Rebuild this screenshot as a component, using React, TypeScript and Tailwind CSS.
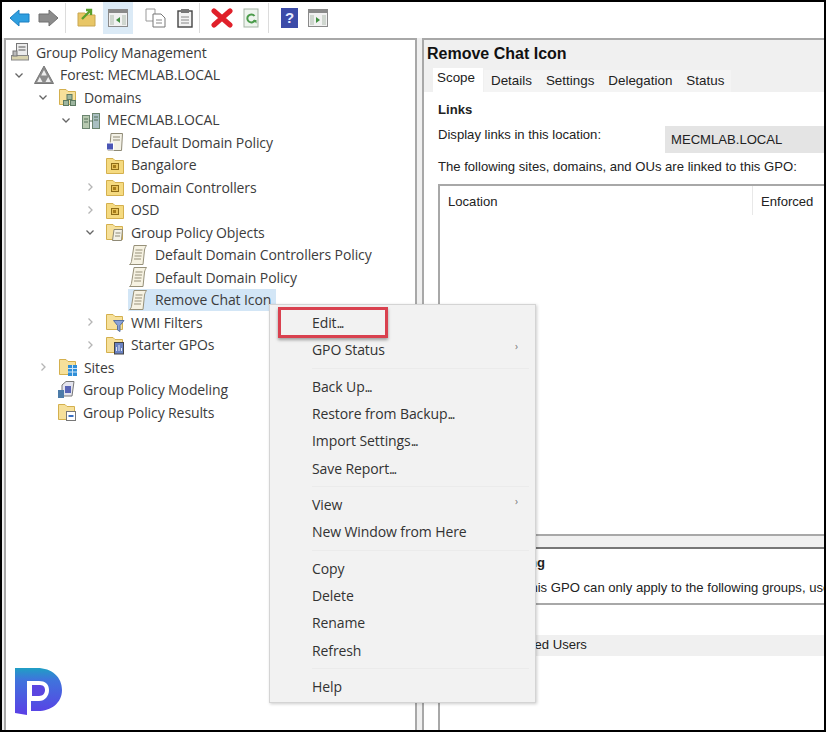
import React from "react";

const seg = "font-['Open_Sans','Noto_Sans',sans-serif]";

function Back({ c1, c2 }: { c1: string; c2: string }) {
  return (
    <svg width="22" height="20" viewBox="0 0 22 20">
      <path d="M1 10 L10 2 V6 H20 V14 H10 V18 Z" fill={c1} stroke={c2} strokeWidth="1" />
    </svg>
  );
}

function Folder({ inner = "#a67c1a" }: { inner?: string }) {
  return (
    <svg width="20" height="20" viewBox="0 0 20 20">
      <path d="M1.5 3.5 H8 L10 5.5 H18.5 V18.5 H1.5 Z" fill="#f5da80" stroke="#d4b04e" />
      <rect x="6.5" y="8.5" width="7" height="6" fill="#e8c35a" stroke="#8f6d17" />
      <rect x="8" y="10" width="3" height="3" fill={inner} />
    </svg>
  );
}

function OpenFolder({ children }: { children: React.ReactNode }) {
  return (
    <svg width="20" height="20" viewBox="0 0 20 20">
      <path d="M1.5 2.5 H8 L10 4.5 H17.5 V17.5 H1.5 Z" fill="#f6e09a" stroke="#d4b04e" />
      {children}
    </svg>
  );
}

function Doc() {
  return (
    <svg width="21" height="22" viewBox="0 0 21 22">
      <path d="M6 1.5 H18.5 C17.5 3 17 4 16.5 6 L15 20.5 H1.5 C3 19.5 3.5 18 3.7 16 Z" fill="#f6f2e2" stroke="#97917a" />
      <path d="M7.5 6 H14.5 M7 9 H14 M6.5 12 H13.5 M6 15 H13" stroke="#97917a" />
    </svg>
  );
}

function Caret({ open }: { open?: boolean }) {
  return (
    <svg width="10" height="10" viewBox="0 0 10 10">
      <path d={open ? "M1.5 3.5 L5 7 L8.5 3.5" : "M3.5 1.5 L7 5 L3.5 8.5"} fill="none" stroke={open ? "#666" : "#b5b5b5"} strokeWidth="1.3" />
    </svg>
  );
}

function Servers() {
  return (
    <>
      <rect x="9" y="7.5" width="5" height="5" fill="#9db59f" stroke="#5d7a62" />
      <rect x="5.5" y="13.5" width="5" height="5" fill="#9db59f" stroke="#5d7a62" />
      <rect x="12.5" y="13.5" width="5" height="5" fill="#9db59f" stroke="#5d7a62" />
    </>
  );
}

type Row = { x: number; caret?: "open" | "closed"; icon: React.ReactNode; label: string; sel?: boolean };

const rows: Row[] = [
  { x: 36, icon: <svg width="20" height="20" viewBox="0 0 20 20"><rect x="6.5" y="1.5" width="11" height="12" fill="#ececec" stroke="#777" /><path d="M8.5 5 H15.5 M8.5 8 H15.5" stroke="#555" /><rect x="1.5" y="13.5" width="17" height="4.5" fill="#d8d2ad" stroke="#888" /><rect x="3" y="9" width="4" height="5" fill="#bbb" stroke="#777" /></svg>, label: "Group Policy Management" },
  { x: 60, caret: "open", icon: <svg width="20" height="20" viewBox="0 0 20 20"><path d="M10 1 L19.5 18.5 H0.5 Z" fill="#8c8c8c" stroke="#777" /><path d="M10 5 L12.8 10.5 H7.2 Z M5.8 12 L8.5 17 H3.2 Z M14.2 12 L16.8 17 H11.5 Z" fill="#eee" /></svg>, label: "Forest: MECMLAB.LOCAL" },
  { x: 84, caret: "open", icon: <OpenFolder><Servers /></OpenFolder>, label: "Domains" },
  { x: 107, caret: "open", icon: <svg width="20" height="20" viewBox="0 0 20 20"><rect x="1.5" y="5.5" width="7" height="13" fill="#b7c9b0" stroke="#6c8570" /><rect x="11.5" y="3.5" width="7" height="15" fill="#a9bfc2" stroke="#6c8570" /><path d="M8 11 H12 M3 9 H7 M3 12 H7 M13 7 H17 M13 10 H17" stroke="#56705a" /></svg>, label: "MECMLAB.LOCAL" },
  { x: 131, icon: <svg width="20" height="20" viewBox="0 0 20 20"><path d="M6 1.5 H17.5 L16.5 18.5 H3 L5 13 Z" fill="#f3f1e6" stroke="#8f8a76" /><path d="M8 5 H15 M8 8 H15" stroke="#8f8a76" /><rect x="1.5" y="11" width="7" height="7" fill="#4a55b5" stroke="#fff" /></svg>, label: "Default Domain Policy" },
  { x: 131, icon: <Folder />, label: "Bangalore" },
  { x: 131, caret: "closed", icon: <Folder />, label: "Domain Controllers" },
  { x: 131, caret: "closed", icon: <Folder />, label: "OSD" },
  { x: 131, caret: "open", icon: <OpenFolder><path d="M9 7.5 H17.5 L16.5 18.5 H7.5 Z" fill="#f3f1e6" stroke="#8f8a76" /><path d="M10.5 11 H15.5 M10 14 H15" stroke="#8f8a76" /></OpenFolder>, label: "Group Policy Objects" },
  { x: 155, icon: <Doc />, label: "Default Domain Controllers Policy" },
  { x: 155, icon: <Doc />, label: "Default Domain Policy" },
  { x: 155, icon: <Doc />, label: "Remove Chat Icon", sel: true },
  { x: 131, caret: "closed", icon: <OpenFolder><path d="M8.5 8.5 H19 L15 13.5 V19.5 L12.5 18 V13.5 Z" fill="#8aa2d8" stroke="#56709f" /></OpenFolder>, label: "WMI Filters" },
  { x: 131, caret: "closed", icon: <OpenFolder><rect x="9.5" y="7.5" width="9" height="11.5" fill="#6a82c2" stroke="#444" /><path d="M11.5 16 V12 M14 16 V10 M16.5 16 V13" stroke="#dfe6f6" /></OpenFolder>, label: "Starter GPOs" },
  { x: 84, caret: "closed", icon: <OpenFolder><rect x="10" y="8" width="9" height="11" fill="#2f8fd8" /><path d="M10 11.5 H19 M10 15 H19 M14.5 8 V19" stroke="#cfe6f8" /></OpenFolder>, label: "Sites" },
  { x: 83, icon: <svg width="20" height="20" viewBox="0 0 20 20"><path d="M5 5 L9 1.5 H17 L15 16 H5 Z" fill="#e4e4ee" stroke="#777" /><rect x="8" y="6" width="6" height="7" fill="#5864b5" /><rect x="1" y="10" width="6" height="8" fill="#4c7ba8" /></svg>, label: "Group Policy Modeling" },
  { x: 83, icon: <OpenFolder><rect x="9.5" y="9.5" width="9" height="9" fill="#fff" stroke="#777" /><path d="M11.5 14 H16.5" stroke="#3a6fc0" strokeWidth="2" /></OpenFolder>, label: "Group Policy Results" },
];

const menu: (string | null | [string])[] = [
  "Edit", ["GPO Status"], null,
  "Back Up", "Restore from Backup", "Import Settings", "Save Report", null,
  ["View"], "New Window from Here", null,
  "Copy", "Delete", "Rename", "Refresh", null,
  "Help",
];
const dotted = ["Edit", "Back Up", "Restore from Backup", "Import Settings", "Save Report"];

function Sep() {
  return <div className="w-px h-[30px] bg-[#dcdcdc]" />;
}

export default function App() {
  return (
    <div className={`relative w-[826px] h-[732px] overflow-hidden bg-white border-2 border-black flex flex-col ${seg}`}>
      <div className="h-[36px] shrink-0 bg-white flex items-center pl-[7px] pb-[4px]">
        <Back c1="#2f9fe0" c2="#1d7fc0" />
        <div className="w-[6px]" />
        <div className="scale-x-[-1]"><Back c1="#8c8c8c" c2="#707070" /></div>
        <div className="w-[6px]" />
        <Sep />
        <div className="w-[11px]" />
        <svg width="20" height="20" viewBox="0 0 20 20"><path d="M1 5 H8 L10 7 H18 V18 H1 Z" fill="#e8c666" stroke="#c9a650" /><path d="M5 11 L13 3 M9 2 H14 V7" stroke="#5aa02c" strokeWidth="2.4" fill="none" /></svg>
        <div className="w-[6px]" />
        <div className="w-[30px] h-[32px] bg-[#dbeaf6] flex items-center justify-center">
          <svg width="20" height="18" viewBox="0 0 20 18"><rect x="0.5" y="0.5" width="19" height="17" fill="#f1f1f1" stroke="#8a8a8a" /><rect x="0" y="0" width="20" height="4" fill="#8a8a8a" /><path d="M2 6 H6 V16 H2 Z M14 6 H18 V16 H14 Z" fill="#cfd6cf" /><path d="M12 8 L8 11 L12 14 Z" fill="#3f8f3f" /></svg>
        </div>
        <div className="w-[12px]" />
        <svg width="21" height="20" viewBox="0 0 21 20"><path d="M1 1 H10 V13 H1 Z" fill="#fff" stroke="#999" /><path d="M8 6 H16 L20 10 V19 H8 Z" fill="#fff" stroke="#777" /><path d="M11 12 H17 M11 15 H17" stroke="#888" /></svg>
        <div className="w-[11px]" />
        <svg width="16" height="20" viewBox="0 0 16 20"><rect x="1" y="3" width="14" height="16" fill="#f3f3f3" stroke="#444" strokeWidth="1.4" /><rect x="4" y="1" width="8" height="4" fill="#777" /><path d="M4 9 H12 M4 12 H12 M4 15 H12" stroke="#888" /></svg>
        <div className="w-[6px]" />
        <Sep />
        <div className="w-[11px]" />
        <svg width="22" height="20" viewBox="0 0 22 20"><path d="M3 3 L19 17 M19 3 L3 17" stroke="#e0202a" strokeWidth="5" strokeLinecap="round" /></svg>
        <div className="w-[10px]" />
        <svg width="16" height="20" viewBox="0 0 16 20"><rect x="1" y="1" width="14" height="18" fill="#eef4ee" stroke="#a5b5a5" /><path d="M11.5 8 A4 4 0 1 0 12 12" fill="none" stroke="#4c9c4c" strokeWidth="2" /><path d="M10 12 H13.5 V15.5 Z" fill="#4c9c4c" /></svg>
        <div className="w-[9px]" />
        <Sep />
        <div className="w-[12px]" />
        <svg width="17" height="22" viewBox="0 0 17 22"><rect x="0" y="1" width="17" height="20" fill="#3b4ba8" /><text x="8.5" y="16" textAnchor="middle" fontSize="15" fontWeight="700" fill="#e8ecff" fontFamily="Liberation Sans">?</text></svg>
        <div className="w-[10px]" />
        <svg width="20" height="18" viewBox="0 0 20 18"><rect x="0.5" y="0.5" width="19" height="17" fill="#f1f1f1" stroke="#8a8a8a" /><rect x="0" y="0" width="20" height="4" fill="#8a8a8a" /><path d="M2 6 H6 V16 H2 Z M14 6 H18 V16 H14 Z" fill="#cfd6cf" /><path d="M8 8 L12 11 L8 14 Z" fill="#3f8f3f" /></svg>
      </div>

      <div className="flex-1 min-h-0 flex bg-[#f0f0f0] pl-[2px]">
        <div className="w-[413px] shrink-0 bg-white border-2 border-b-0 border-[#a8a8a8] pt-[1px]">
          {rows.map((r) => (
            <div key={r.label} className="relative h-[22.5px] flex items-center text-[14px] tracking-[-0.1px] text-[#3c3c3c]" style={{ paddingLeft: r.x - 33 }}>
              {r.caret && <span className="absolute top-[6px]" style={{ left: r.x - 52 }}><Caret open={r.caret === "open"} /></span>}
              <div className={`flex items-center h-[22px] ${r.sel ? "bg-[#d3e6f6]" : ""}`}>
                <span className="w-[21px] flex justify-center">{r.icon}</span>
                <span className="ml-[6px] pr-[5px] whitespace-nowrap">{r.label}</span>
              </div>
            </div>
          ))}
        </div>
        <div className="w-[5px] shrink-0" />
        <div className="flex-1 min-w-0 bg-white border-2 border-b-0 border-r-0 border-[#a8a8a8] font-['Liberation_Sans',sans-serif] text-[13.1px] text-[#222] overflow-hidden flex flex-col">
          <div className="bg-[#f0f0f0] h-[52px] shrink-0">
            <div className="font-bold text-[16px] text-[#111] pl-[3px] pt-[4px] leading-[20px]">Remove Chat Icon</div>
            <div className="flex pl-[9px] mt-[4px] items-end h-[24px] text-[13.4px]">
              <div className="bg-white pl-[4px] h-[24px] leading-[20px] w-[50px] mr-[1px]">Scope</div>
              {["Details", "Settings", "Delegation", "Status"].map((t) => (
                <div key={t} className="h-[22px] leading-[22px] px-[7px] bg-[#f4f4f4]">{t}</div>
              ))}
            </div>
          </div>
          <div className="pl-[14px] pt-[9px] h-[444px] shrink-0 flex flex-col">
            <div className="font-bold leading-[18px]">Links</div>
            <div className="flex items-start mt-[6px] whitespace-nowrap">
              <span className="w-[227px] leading-[20px] shrink-0">Display links in this location:</span>
              <div className="flex-1 h-[27px] bg-[#e4e4e4] pl-[6px] leading-[28px] mt-[1px]">MECMLAB.LOCAL</div>
            </div>
            <div className="mt-[4px] leading-[20px] whitespace-nowrap">The following sites, domains, and OUs are linked to this GPO:</div>
            <div className="mt-[7px] flex-1 border-y-2 border-l-2 border-[#a8a8a8] flex">
              <div className="w-[313px] pl-[8px] pt-[8px] leading-[16px] border-r border-[#e8e8e8] h-[29px]">Location</div>
              <div className="pl-[8px] pt-[8px] leading-[16px] whitespace-nowrap">Enforced</div>
            </div>
          </div>
          <div className="h-[13px] shrink-0 bg-[#f0f0f0] border-b-2 border-[#777]" />
          <div className="pl-[14px] pt-[5px] flex-1 min-h-0 flex flex-col">
            <div className="font-bold leading-[18px] whitespace-nowrap">Security Filtering</div>
            <div className="mt-[6px] leading-[20px] whitespace-nowrap">The settings in this GPO can only apply to the following groups, users, and computers:</div>
            <div className="mt-[5px] flex-1 border-t-2 border-l-2 border-[#a8a8a8] pt-[30px]">
              <div className="h-[21px] leading-[20px] bg-[#f0f0f0] pl-[29px] whitespace-nowrap">Authenticated Users</div>
            </div>
          </div>
        </div>
      </div>

      <div className="absolute left-[267px] top-[302px] w-[267px] h-[399px] bg-[#f2f2f2] border border-[#d4d4d4] shadow-[1px_1px_3px_rgba(0,0,0,0.2)] pt-[4px] text-[14px] tracking-[-0.1px] text-[#333]">
        {menu.map((m, i) =>
          m === null ? (
            <div key={i} className="h-[9px] flex items-center ml-[42px] mr-[6px]"><div className="h-px w-full bg-[#ebebeb]" /></div>
          ) : (
            <div key={i} className="h-[27.33px] flex items-center pl-[42px] pr-[17px] justify-between">
              <span>
                {Array.isArray(m) ? m[0] : m}
                {!Array.isArray(m) && dotted.includes(m) && <span className="tracking-[-1.5px]">...</span>}
              </span>
              {Array.isArray(m) && <span className="text-[10px] text-[#777] mb-[6px]">›</span>}
            </div>
          )
        )}
        <div className="absolute left-[8px] top-[2px] w-[110px] h-[31px] border-[3px] border-[#d9414f] shadow-[0_2px_3px_rgba(0,0,0,0.35)]" />
      </div>

      <svg className="absolute left-[13px] top-[665px] blur-[0.5px]" width="47" height="49" viewBox="0 0 47 49">
        <defs>
          <linearGradient id="logo" x1="0" y1="0" x2="0" y2="1">
            <stop offset="0" stopColor="#1f9fc4" />
            <stop offset="0.25" stopColor="#3f74dc" />
            <stop offset="1" stopColor="#5b3fe6" />
          </linearGradient>
        </defs>
        <path d="M0 1 H22 C37 1 47 10 47 23 C47 36 36 44 23 44 H16 V34 H24 C30 34 34 29 34 23 C34 17 30 14 24 14 H12 V48 L0 46 Z" fill="url(#logo)" />
        <path d="M17 18 H25 C29 18 30 21 30 23 C30 26 28 29 24 29 H17 Z" fill="#5b46e0" />
      </svg>
    </div>
  );
}
